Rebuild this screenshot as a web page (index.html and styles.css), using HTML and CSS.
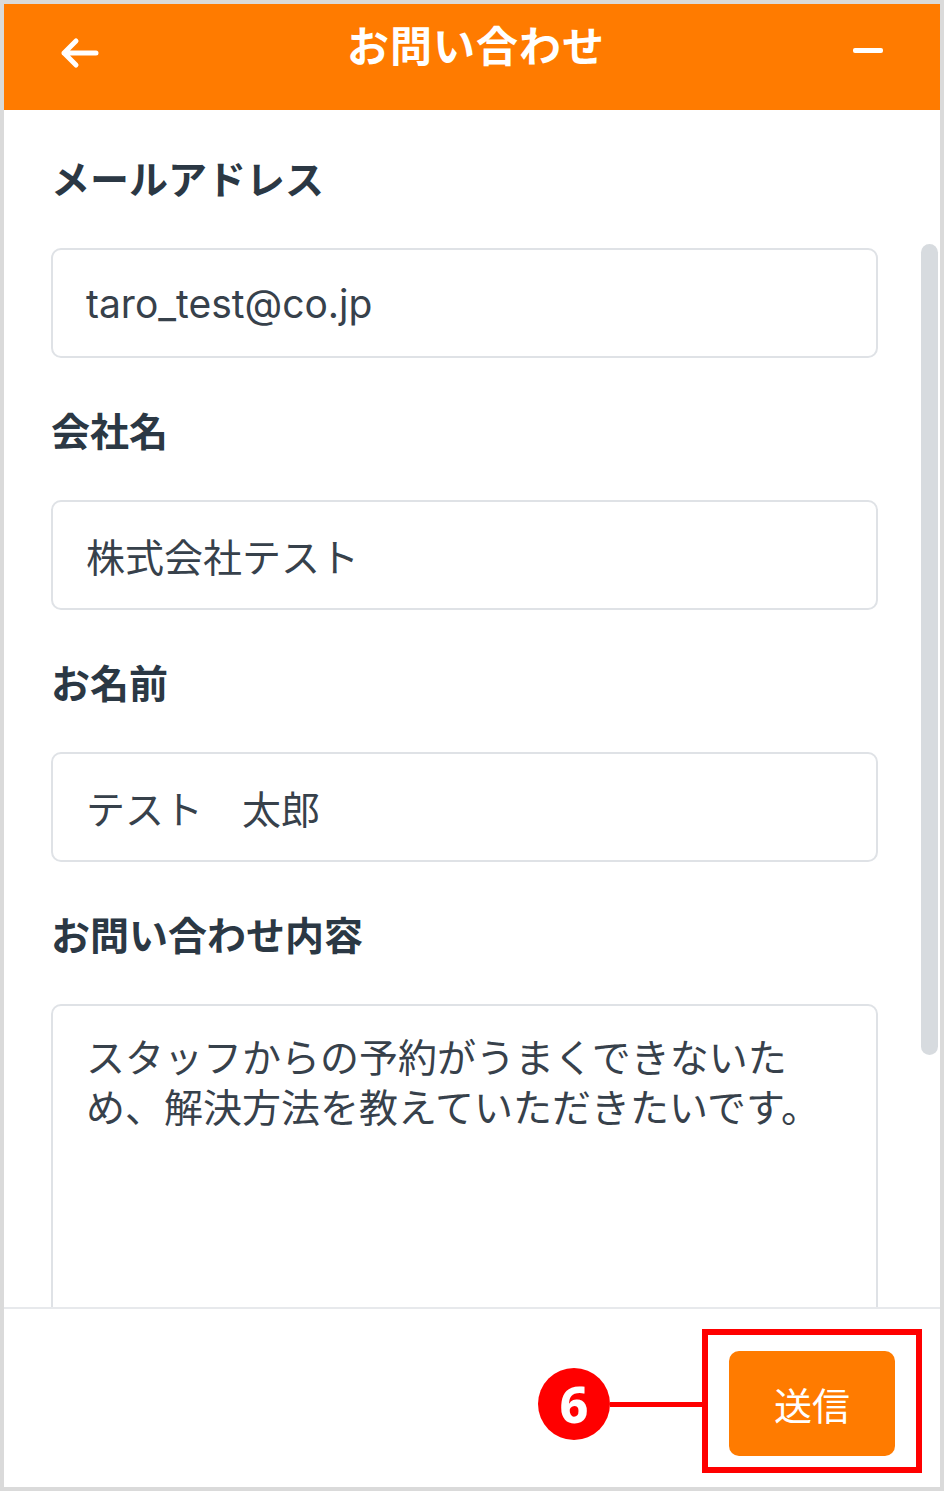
FILE: index.html
```html
<!DOCTYPE html>
<html lang="ja">
<head>
  <meta charset="UTF-8" />
  <meta name="viewport" content="width=device-width, initial-scale=1.0" />
  <title>お問い合わせ</title>
  <link rel="stylesheet" href="styles.css">
</head>
<body>
  <div class="frame">
    <header class="topbar">
      <svg class="icon back" width="40" height="32" viewBox="0 0 40 32">
        <path d="M37 16 H5 M17 4 L5 16 L17 28" fill="none" stroke="#fff" stroke-width="5" stroke-linecap="round" stroke-linejoin="round"/>
      </svg>
      <h1>お問い合わせ</h1>
      <span class="minus"></span>
    </header>

    <div class="content">
      <form class="form">
        <div class="field">
          <label>メールアドレス</label>
          <div class="input">taro_test@co.jp</div>
        </div>
        <div class="field">
          <label>会社名</label>
          <div class="input">株式会社テスト</div>
        </div>
        <div class="field">
          <label>お名前</label>
          <div class="input">テスト　太郎</div>
        </div>
        <div class="field">
          <label>お問い合わせ内容</label>
          <div class="input textarea">スタッフからの予約がうまくできないため、解決方法を教えていただきたいです。</div>
        </div>
      </form>
      <div class="scrollbar"></div>
    </div>

    <footer class="footer">
      <span class="badge">6</span>
      <span class="leader"></span>
      <div class="highlight">
        <button class="send" type="button">送信</button>
      </div>
    </footer>
  </div>
</body>
</html>
```

FILE: styles.css
```css
body { margin: 0; background: #fff; font-family: "Inter", "Noto Sans CJK JP", sans-serif; }
.frame { width: 944px; height: 1491px; box-sizing: border-box; border: 4px solid #dadada; display: flex; flex-direction: column; background: #fff; overflow: hidden; }

.topbar { height: 106px; flex: none; background: #ff7b00; display: flex; align-items: center; justify-content: space-between; padding: 0 57px 10px 55px; box-sizing: border-box; }
.topbar h1 { margin: 0 0 16px; color: #fff; font-size: 42px; font-weight: 700; letter-spacing: 1px; line-height: 50px; font-family: "Noto Sans CJK JP", sans-serif; }
.icon.back { display: block; margin-top: 2px; }
.minus { display: block; width: 30px; height: 5px; background: #fff; border-radius: 2px; margin-bottom: 3px; }

.content { flex: 1; display: flex; overflow: hidden; }
.form { flex: 1; padding: 42px 43px 0 47px; margin: 0; }
.field { margin-bottom: 46px; }
.field label { display: block; font-family: "Noto Sans CJK JP", sans-serif; font-size: 39px; font-weight: 700; line-height: 50px; color: #2b3844; margin-bottom: 46px; }
.input { height: 110px; box-sizing: border-box; border: 2px solid #dfe2e6; border-radius: 10px; padding: 0 33px; display: flex; align-items: center; font-size: 39px; color: #37414b; }
.textarea { height: 420px; align-items: flex-start; padding-top: 24px; line-height: 50px; font-family: "Noto Sans CJK JP", sans-serif; }
.scrollbar { width: 17px; height: 811px; margin: 134px 2px 0 0; background: #d7dbdf; border-radius: 9px; flex: none; }

.footer { height: 180px; flex: none; border-top: 2px solid #e7e9ec; box-sizing: border-box; display: flex; align-items: center; justify-content: flex-end; padding: 6px 18px 0 0; }
.badge { width: 72px; height: 72px; border-radius: 50%; background: #ff0000; color: #fff; font-family: "Noto Sans", sans-serif; font-weight: 800; font-size: 50px; line-height: 72px; text-align: center; margin-top: 6px; }
.leader { width: 92px; height: 5px; background: #ff0000; margin-top: 6px; }
.highlight { width: 220px; height: 144px; box-sizing: border-box; border: 6px solid #ff0000; padding: 16px 21px 11px; }
.send { width: 100%; height: 100%; border: none; border-radius: 10px; background: #ff7b00; color: #fff; font-family: "Noto Sans CJK JP", sans-serif; font-size: 38px; padding: 0; }
```
